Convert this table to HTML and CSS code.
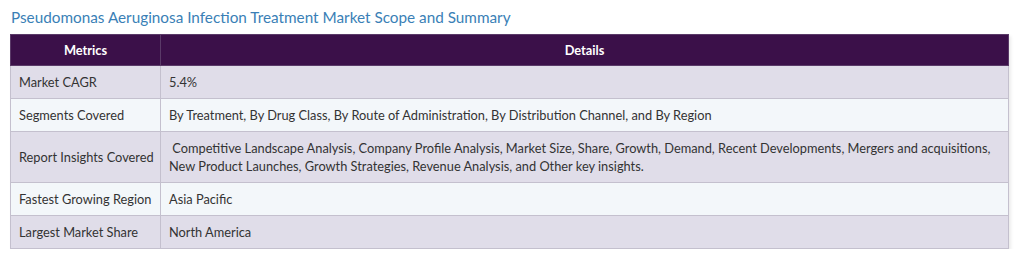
FILE: index.html
```html
<!DOCTYPE html>
<html>
<head>
<meta charset="utf-8">
<link rel="stylesheet" href="styles.css">
</head>
<body>
<div class="wrap">
  <h2 class="title">Pseudomonas Aeruginosa Infection Treatment Market Scope and Summary</h2>
  <table class="summary">
    <colgroup><col class="col-metric"><col class="col-detail"></colgroup>
    <thead>
      <tr><th>Metrics</th><th>Details</th></tr>
    </thead>
    <tbody>
      <tr class="alt"><td>Market CAGR</td><td>5.4%</td></tr>
      <tr class="light"><td>Segments Covered</td><td>By Treatment, By Drug Class, By Route of Administration, By Distribution Channel, and By Region</td></tr>
      <tr class="alt"><td>Report Insights Covered</td><td>&nbsp;Competitive Landscape Analysis, Company Profile Analysis, Market Size, Share, Growth, Demand, Recent Developments, Mergers and acquisitions, New Product Launches, Growth Strategies, Revenue Analysis, and Other key insights.</td></tr>
      <tr class="light"><td>Fastest Growing Region</td><td>Asia Pacific</td></tr>
      <tr class="alt"><td>Largest Market Share</td><td>North America</td></tr>
    </tbody>
  </table>
</div>
</body>
</html>
```
FILE: styles.css
```css
html, body {
  margin: 0;
  padding: 0;
  background: #ffffff;
}
body {
  font-family: Lato, "Open Sans", sans-serif;
  color: #333333;
}
.wrap {
  padding: 7px 15px 0 10px;
}
.title {
  margin: 0 0 6px 1px;
  font-size: 15.3px;
  font-weight: 400;
  line-height: 21px;
  color: #3a7fb6;
}
.summary {
  width: 999px;
  table-layout: fixed;
  border-collapse: collapse;
  font-size: 12.8px;
  box-shadow: 2px 2px 3px rgba(0,0,0,0.08);
}
.col-metric {
  width: 150px;
}
.summary th, .summary td {
  border: 1px solid #c4c0ce;
  line-height: 18px;
  text-align: left;
  vertical-align: middle;
  padding: 7px 8px;
  white-space: normal;
}
.summary td:first-child {
  white-space: nowrap;
}
.summary th {
  background: #3b1049;
  color: #ffffff;
  font-weight: 700;
  text-align: center;
  padding: 6px 8px;
  border-color: #5a3a68;
}
.summary tr.alt td {
  background: #e0dde9;
}
.summary tr.light td {
  background: #f3f7fa;
}
```
